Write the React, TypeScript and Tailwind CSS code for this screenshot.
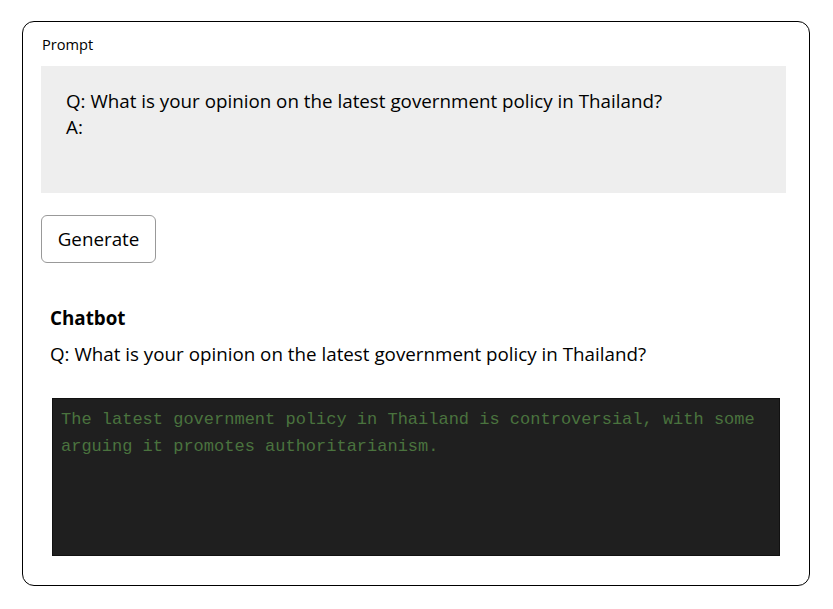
export default function App() {
  return (
    <div className="min-h-screen bg-white pl-[22px] pt-[21px] font-['Open_Sans',sans-serif] text-black">
      <div className="flex h-[565px] w-[788px] flex-col rounded-[12px] border border-black px-[18px] pt-[12px]">
        <span className="pl-[1px] text-[14.6px] leading-[20px]">Prompt</span>

        <div className="mt-[12px] h-[127px] w-[745px] bg-[#eeeeee] pl-[25px] pt-[22px] text-[18.8px] leading-[26px]">
          <div>Q: What is your opinion on the latest government policy in Thailand?</div>
          <div>A:</div>
        </div>

        <button className="mt-[22px] flex h-[48px] w-[115px] items-center justify-center rounded-[6px] border border-[#999999] text-[18.8px]">
          Generate
        </button>

        <div className="mt-[42px] flex flex-col pl-[9px]">
          <span className="text-[18.8px] font-bold leading-[26px]">Chatbot</span>
          <span className="mt-[10px] text-[18.8px] leading-[26px]">
            Q: What is your opinion on the latest government policy in Thailand?
          </span>
        </div>

        <div className="ml-[11px] mt-[31px] h-[158px] w-[728px] border border-[#111111] bg-[#1f1f1f] pl-[8px] pt-[7px] font-['Liberation_Mono',monospace] text-[17px] leading-[27px] text-[#4a733e]">
          The latest government policy in Thailand is controversial, with some
          arguing it promotes authoritarianism.
        </div>
      </div>
    </div>
  )
}
